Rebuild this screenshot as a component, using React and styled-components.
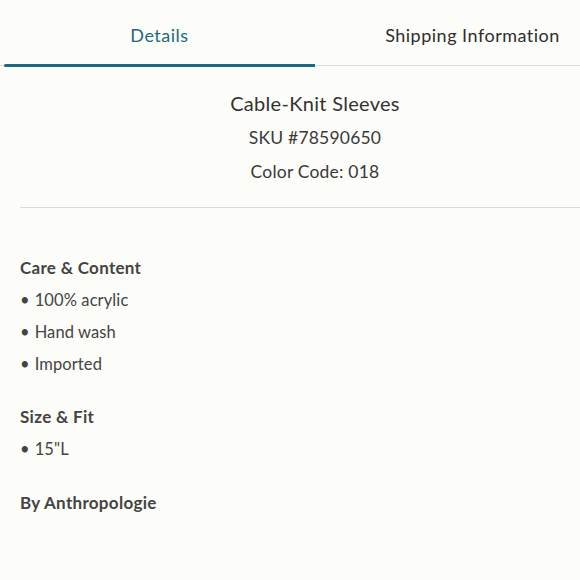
import React from 'react';
import styled, { createGlobalStyle } from 'styled-components';

const GlobalStyle = createGlobalStyle`
  html, body {
    margin: 0;
    padding: 0;
    background: #fcfcf8;
    overflow: hidden;
  }
  body {
    font-family: Lato, "Noto Sans", sans-serif;
    color: #3a3a3a;
  }
`;

const Page = styled.div`
  width: 630px;
  min-height: 580px;
  background: #fcfcf8;
`;

const Tabs = styled.div`
  display: flex;
  padding-left: 4px;
  border-bottom: 1px solid #dcdcd8;
  height: 66px;
  box-sizing: border-box;
`;

const Tab = styled.button`
  flex: 0 0 ${p => (p.$active ? '311px' : '315px')};
  background: none;
  border: none;
  padding: 5px 0 0;
  font-family: inherit;
  font-size: 18px;
  letter-spacing: 0.5px;
  color: ${p => (p.$active ? '#1d6a7e' : '#2e2e2e')};
  position: relative;
  display: flex;
  align-items: center;
  justify-content: center;
  cursor: pointer;

  &::after {
    content: '';
    display: ${p => (p.$active ? 'block' : 'none')};
    position: absolute;
    left: 0;
    right: 0;
    bottom: -2px;
    height: 3px;
    border-radius: 2px 0 0 2px;
    background: #1d6a7e;
  }
`;

const Body = styled.div`
  padding: 0 20px;
`;

const Summary = styled.div`
  display: flex;
  flex-direction: column;
  align-items: center;
  gap: 10px;
  padding: 24px 0 23px;
  border-bottom: 1px solid #dcdcd8;
`;

const Title = styled.h1`
  margin: 0;
  font-size: 20px;
  font-weight: 400;
  letter-spacing: 0.3px;
  line-height: 26px;
  color: #333;
`;

const Meta = styled.div`
  font-size: 17.5px;
  letter-spacing: 0.2px;
  line-height: 24px;
  color: #3a3a3a;
`;

const Sections = styled.div`
  display: flex;
  flex-direction: column;
  gap: 29px;
  padding-top: 48px;
`;

const Section = styled.section`
  display: flex;
  flex-direction: column;
`;

const Heading = styled.h2`
  margin: 0 0 8px;
  font-size: 17px;
  font-weight: 700;
  letter-spacing: 0.3px;
  line-height: 24px;
  color: #444;
`;

const Brand = styled(Heading)`
  margin-top: 1px;
`;

const List = styled.ul`
  list-style: none;
  margin: 0;
  padding: 0;
  display: flex;
  flex-direction: column;
  gap: 8px;
`;

const Item = styled.li`
  font-size: 16.5px;
  letter-spacing: 0.1px;
  line-height: 24px;
  color: #444;

  &::before {
    content: '•';
    margin-right: 5px;
  }
`;

const sections = [
  { title: 'Care & Content', items: ['100% acrylic', 'Hand wash', 'Imported'] },
  { title: 'Size & Fit', items: ['15"L'] },
];

export default function App() {
  return (
    <Page>
      <GlobalStyle />
      <Tabs>
        <Tab $active>Details</Tab>
        <Tab>Shipping Information</Tab>
      </Tabs>
      <Body>
        <Summary>
          <Title>Cable-Knit Sleeves</Title>
          <Meta>SKU #78590650</Meta>
          <Meta>Color Code: 018</Meta>
        </Summary>
        <Sections>
          {sections.map(s => (
            <Section key={s.title}>
              <Heading>{s.title}</Heading>
              <List>
                {s.items.map(i => (
                  <Item key={i}>{i}</Item>
                ))}
              </List>
            </Section>
          ))}
          <Brand as="h2">By Anthropologie</Brand>
        </Sections>
      </Body>
    </Page>
  );
}
